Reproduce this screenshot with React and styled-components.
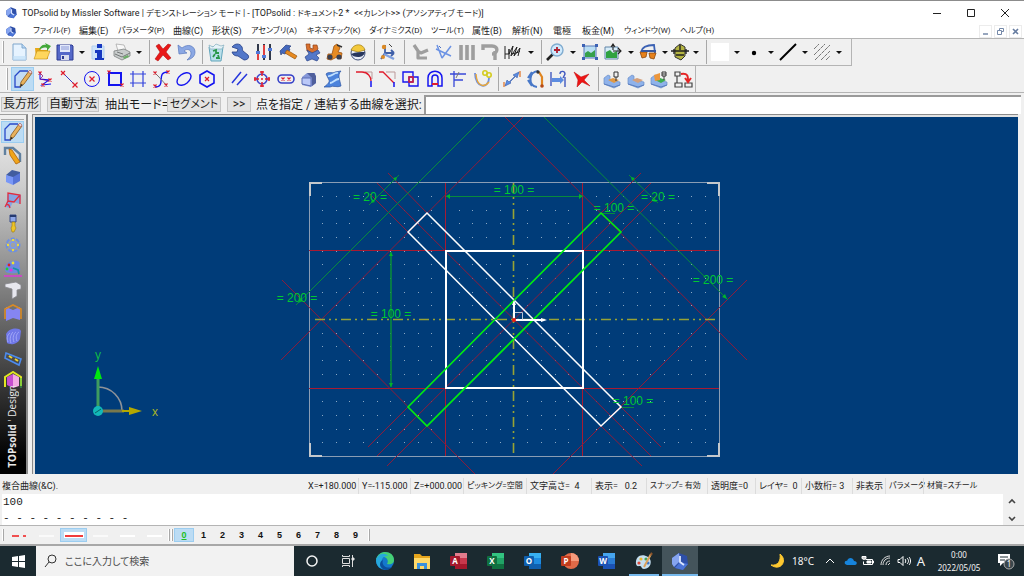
import React from 'react';
import styled, { createGlobalStyle, css } from 'styled-components';

const GlobalStyle = createGlobalStyle`
  * { box-sizing: border-box; }
  body {
    margin: 0;
    background: #f0f0f0;
    color: #1c1c1c;
    font-family: Roboto, "Noto Sans CJK JP", sans-serif;
    font-feature-settings: "palt";
    overflow: hidden;
  }
  button, input, textarea { font: inherit; color: inherit; font-feature-settings: inherit; }
  button { margin: 0; padding: 0; border: 0; background: none; }
`;

const Window = styled.div`
  display: flex;
  flex-direction: column;
  height: 100vh;
`;

const TitleBar = styled.header`
  display: flex;
  align-items: center;
  flex: 0 0 24px;
  padding: 0 2px 0 5px;
  background: #fff;
  border-top: 1px solid #8c8c8c;
`;

const Title = styled.h1`
  flex: 1;
  margin: 0 0 0 4px;
  font-size: 9px;
  font-weight: 400;
  white-space: pre;
`;

const Kana = styled.span`
  font-size: 8px;
`;

const CaptionButton = styled.button`
  display: flex;
  align-items: center;
  justify-content: center;
  width: 34px;
  height: 22px;
`;

const MenuBar = styled.nav`
  display: flex;
  align-items: center;
  flex: 0 0 14px;
  padding: 0 2px 0 5px;
  background: #fff;
`;

const MenuItems = styled.div`
  display: flex;
  flex: 1;
  margin-left: 16px;
`;

const MenuItem = styled.button`
  width: ${p => p.$w}px;
  font-size: ${p => (p.$kana ? 8 : 9)}px;
  line-height: 14px;
  text-align: left;
  white-space: nowrap;
`;

const ChildButton = styled.button`
  display: flex;
  align-items: center;
  justify-content: center;
  width: 13px;
  height: 13px;
  margin-left: 2px;
  border: 1px solid #ececec;
  background: #fff;
`;

const ToolRow = styled.div`
  display: flex;
  align-items: stretch;
  align-self: flex-start;
  flex: 0 0 ${p => p.$h}px;
  padding: 1px ${p => p.$end}px 1px 2px;
  border: solid #b4b4b4;
  border-width: ${p => (p.$first ? '0 1px 1px 0' : '0 1px 0 0')};
`;

const ToolEdge = styled.div`
  display: flex;
  flex-direction: column;
  border-top: ${p => (p.$top ? '1px solid #b4b4b4' : '0')};
  border-bottom: ${p => (p.$bottom ? '1px solid #b4b4b4' : '0')};
`;

const Grip = styled.span`
  width: 2px;
  margin: 1px ${p => p.$after}px 1px ${p => p.$before || 0}px;
  border-right: 1px solid #a8a8a8;
  border-left: 1px solid #fff;
`;

const Divider = styled.span`
  width: ${p => p.$w || 7}px;
  background: linear-gradient(#a8a8a8, #a8a8a8) 5px 0 / 1px 100% no-repeat;
`;

const selected = css`
  background: #bcdcf4;
  box-shadow: inset 0 0 0 1px #9ccdf0;
`;

const ToolButton = styled.button`
  display: flex;
  align-items: center;
  justify-content: center;
  flex: 0 0 auto;
  width: ${p => p.$w || 23}px;
  ${p => p.$active && selected}
`;

const Caret = styled.span`
  border: 3px solid transparent;
  border-top-color: #111;
  border-bottom: 0;
`;

const PromptBar = styled.form`
  display: flex;
  align-items: center;
  flex: 0 0 21px;
  padding: 2px 3px 0 1px;
  font-size: 12px;
  line-height: 16px;
  white-space: pre;
`;

const PromptButton = styled.button`
  width: ${p => p.$w}px;
  height: 15px;
  margin-right: ${p => p.$after || 6}px;
  border: 1px solid #c4c4c4;
  background: #e3e3e3;
  font-size: ${p => (p.$kana ? 11 : 12)}px;
  line-height: 13px;
`;

const PromptText = styled.label`
  width: ${p => p.$w}px;
`;

const PromptInput = styled.input`
  flex: 1;
  min-width: 0;
  height: 19px;
  padding: 0 2px;
  border: 1px solid #9a9a9a;
  border-width: 2px 0 0 2px;
  background: #fff;
  outline: 0;
`;

const Work = styled.main`
  display: flex;
  flex: 1;
  min-height: 0;
  padding-bottom: 4px;
`;

const Side = styled.aside`
  position: relative;
  width: 28px;
  padding: 3px 2px 0 1px;
  border-right: 2px solid #8a8a8a;
  border-top: 1px solid #a0a0a0;
  background: linear-gradient(#f0f0f0 0, #cdcdcd 20%, #7c7c7c 50%, #404040 72%, #000 96%);
`;

const SideGrip = styled.div`
  height: 2px;
  margin-bottom: 1px;
  border-bottom: 1px solid #a8a8a8;
`;

const SideTools = styled.div`
  display: flex;
  flex-direction: column;
  justify-content: space-between;
  height: 271px;
`;

const SideButton = styled.button`
  display: flex;
  align-items: center;
  justify-content: center;
  height: 22px;
  ${p => p.$active && selected}
`;

const Brand = styled.div`
  position: absolute;
  left: 5px;
  bottom: 6px;
  writing-mode: vertical-rl;
  transform: rotate(180deg);
  color: #e8e8e8;
  font: 10px/14px "Open Sans", sans-serif;
  white-space: nowrap;
`;

const View = styled.section`
  flex: 1;
  min-width: 0;
  margin: 0 6px 0 4px;
  border: solid #8a8a8a;
  border-width: 1px 0 0 1px;
  padding: 2px 0 0 2px;
  background: #e2e2e2;
`;

const Drawing = styled.svg`
  display: block;
  width: 100%;
  height: 100%;
  background: #003c79;
  font-family: "Liberation Sans Narrow", "Liberation Sans", sans-serif;
`;

const StatusBar = styled.div`
  display: flex;
  flex: 0 0 16px;
  font-size: 9px;
  line-height: 16px;
  white-space: pre;
`;

const StatusText = styled.div`
  flex: 1;
  padding-left: 2px;
`;

const StatusCell = styled.div`
  width: ${p => p.$w}px;
  padding-left: 3px;
  border-left: ${p => (p.$plain ? '0' : '1px solid #dcdcdc')};
  font-size: ${p => (p.$kana ? 8 : 9)}px;
`;

const Console = styled.div`
  display: flex;
  flex: 0 0 32px;
  min-height: 0;
  padding: 0 4px 0 2px;
  border-bottom: 1px solid #b4b4b4;
`;

const Log = styled.textarea`
  flex: 1;
  height: 31px;
  padding: 0 1px;
  border: 0;
  outline: 0;
  resize: none;
  overflow: hidden;
  background: #fff;
  font: 11px/16px "Liberation Mono", monospace;
`;

const Scroller = styled.div`
  display: flex;
  flex-direction: column;
  justify-content: space-between;
  width: 17px;
  padding: 2px 0;
  line-height: 10px;
`;

const BottomBar = styled.div`
  display: flex;
  flex: 0 0 20px;
  padding: 2px;
  border-bottom: 2px solid #a8a8a8;
`;

const LineButton = styled.button`
  display: flex;
  align-items: center;
  justify-content: center;
  width: 27px;
  height: 14px;
  ${p => p.$active && selected}
`;

const LayerButton = styled.button`
  width: ${p => (p.$active ? 20 : 19)}px;
  height: 14px;
  font: bold 9px/13px "Liberation Sans", sans-serif;
  color: ${p => (p.$active ? '#1fc01f' : '#111')};
  text-decoration: ${p => (p.$active ? 'underline' : 'none')};
  ${p => p.$active && selected}
`;

const TaskBar = styled.footer`
  display: flex;
  flex: 0 0 30px;
  align-items: stretch;
  background: #1b2a30;
  color: #f4f4f4;
  font-family: "Noto Sans", "Noto Sans CJK JP", sans-serif;
`;

const Start = styled.button`
  display: flex;
  align-items: center;
  justify-content: center;
  width: 36px;
`;

const Search = styled.label`
  display: flex;
  align-items: center;
  width: 258px;
  padding-left: 8px;
  background: #f2f2f2;
  color: #444;
`;

const SearchInput = styled.input`
  flex: 1;
  min-width: 0;
  margin-left: 7px;
  padding: 0;
  border: 0;
  outline: 0;
  background: none;
  font-size: 10px;
  &::placeholder { color: #4c4c4c; opacity: 1; }
`;

const TaskButton = styled.button`
  display: flex;
  align-items: center;
  justify-content: center;
  width: ${p => p.$w || 37}px;
  background: ${p => (p.$active ? '#44545b' : 'none')};
  ${p => p.$open && css`
    background-image: linear-gradient(#76b9ed, #76b9ed);
    background-repeat: no-repeat;
    background-position: center bottom;
    background-size: ${p.$active ? '100%' : '30px'} 2px;
  `}
`;

const Tray = styled.div`
  display: flex;
  align-items: center;
  margin-left: auto;
`;

const TrayButton = styled.button`
  display: flex;
  align-items: center;
  justify-content: center;
  width: ${p => p.$w || 18}px;
  font-size: ${p => p.$size || 10}px;
  line-height: 13px;
  white-space: nowrap;
`;

const Clock = styled.time`
  width: 58px;
  font-size: 8px;
  line-height: 13px;
  text-align: center;
`;

const blue = '#1414f0';
const red = '#e01c2c';

const Icon = ({ children, size = 20 }) => (
  <svg width={size} height={size} viewBox="0 0 20 20" fill="none" aria-hidden="true">{children}</svg>
);

const Cross = ({ x, y, r = 2 }) => (
  <path d={`M${x - r} ${y - r}l${2 * r} ${2 * r}m0 ${-2 * r}l${-2 * r} ${2 * r}`} stroke={red} strokeWidth="1.2" />
);

const logo = <>
  <path d="M2 7l7-5 8 3 1 8-5 6-8-2-3-4z" fill="#2e4fa8" />
  <path d="M2 7l7-5 1 8-6 6-2-3z" fill="#86a5f0" />
  <path d="M10 11l8 2-5 6-8-2z" fill="#4b74d6" />
  <path d="M10 5v6l4 3" stroke="#dbe6ff" strokeWidth="1.8" />
</>;

const sketch = <>
  <path d="M2 18V7l5-5h9l-3 12-6 4z" fill="#c3dcf5" />
  <path d="M8 18H2V7l5-5h8" stroke="#2848c8" strokeWidth="1.3" />
  <path d="M7 18l1-5 8-11 3 2-8 11z" fill="#e8b25c" stroke="#85571c" strokeWidth=".8" />
  <path d="M15 3l3 2 1-2-2-2z" fill="#f0d5d5" stroke="#a05050" strokeWidth=".6" />
  <path d="M7 18l1-3 2 1z" fill="#222" />
</>;

const box = (front, side) => <>
  <path d="M3 8l6-5 8 2v4l-7 2z" fill="#425d9f" />
  <path d="M3 8l7 2v8l-7-3z" fill={front} />
  <path d="M10 10l7-4v8l-7 4z" fill={side} />
</>;

const tray = (accent) => <>
  <path d="M2 9l4-3 2 1v4l10 2v3l-6 3-10-4z" fill="#8fb2ea" stroke="#6c8fc9" strokeWidth=".7" />
  <path d="M6 11l5-2 6 2-5 3z" fill={accent} />
  <path d="M2 15l10 3 6-2" stroke="#5b7ebf" />
</>;

const glyphs = {
  new: <><path d="M4 2h9l4 4v12H4z" fill="#e6f3ff" stroke="#7fa6cc" /><path d="M13 2v4h4" fill="#b9d8f5" stroke="#7fa6cc" /><path d="M4 14h13v4H4z" fill="#c2e0f8" opacity=".7" /></>,
  open: <><path d="M3 6h5l1 2h7v9H4z" fill="#e8a818" /><path d="M2 17l3-8h13l-3 8z" fill="#ffd65c" stroke="#c58d10" strokeWidth=".6" /><path d="M7 8c1-4 4-6 7-5l-1-2 6 3-4 5v-3c-3-1-5 0-8 2z" fill="#43a83a" /></>,
  save: <><path d="M2 3h15l1 1v14H2z" fill="#5568c8" stroke="#2c3b92" /><path d="M5 3h10v7H5z" fill="#e2e8fa" /><path d="M6 13h8v5H6z" fill="#d9dcec" /><path d="M7 14h2v3H7z" fill="#2c3b92" /><path d="M6 5h8M6 7h8" stroke="#8c9ad8" /></>,
  info: <><path d="M3 4h12v13H3z" fill="#cfe4fa" stroke="#b4d0ee" /><rect x="8" y="2" width="5" height="4" fill="#1738c0" /><path d="M6 8h7v8h2v2H6v-2h2v-5H6z" fill="#1738c0" /></>,
  print: <><path d="M4 2l8 1 2 5-8 1z" fill="#f8f8f8" stroke="#a0a0a0" strokeWidth=".7" /><path d="M2 9l10-2 6 3v4l-8 4-8-4z" fill="#c8cccc" stroke="#7c8080" strokeWidth=".8" /><path d="M3 12l7 3 8-4M5 10l6 2" stroke="#747878" /><path d="M11 15l5-2 1 2-5 2z" fill="#6cae68" /></>,
  del: <path d="M3 4l3-2 4 5 5-5 3 1-5 7 5 6-3 2-5-5-5 6-3-2 5-7z" fill="#e81818" stroke="#a80808" strokeWidth=".5" />,
  undo: <><path d="M2 3l1 9 8-1-3-2c3-3 7-1 7 2 0 3-1 4-4 7 5-1 8-4 8-8C19 4 12 1 6 6z" fill="#8ba8e4" stroke="#5777bd" strokeWidth=".7" /></>,
  recycle: <><path d="M3 5h14l-2 14H5z" fill="#b9dfea" stroke="#62a6bc" /><path d="M3 3l4 2 3-3 5 2 3-1-2 4H4z" fill="#e6f3f8" stroke="#82aebf" strokeWidth=".7" /><path d="M7 9l3-1v3h3M7 15l2-3m1 4h3l-1-3" stroke="#289848" strokeWidth="1.8" /></>,
  wrench: <path d="M2 5c3-4 8-4 10 0 1 2 0 3 1 4l5 4c2 3-1 5-4 5l-6-4c-3 0-5-1-6-4l5 0 1-3z" fill="#5277c9" stroke="#253f86" strokeWidth=".8" />,
  sliders: <><path d="M4 2v16M10 2v16M16 2v16" stroke="#30384a" strokeWidth="2" /><path d="M4 10v8M10 3v11" stroke="#e04040" strokeWidth="2" /><path d="M2 9h4v3H2zM8 13h4v3H8zM14 6h4v3h-4z" fill="#5078d8" /></>,
  hammer: <><path d="M2 9l6-6 5 1-2 2 1 2-5 4-3-1-1 2z" fill="#4468bd" stroke="#263f80" strokeWidth=".7" /><path d="M9 8l10 6-2 3L7 11z" fill="#e78a20" stroke="#99540e" strokeWidth=".7" /></>,
  fittings: <><path d="M4 2h4v4l3 1V3h4l1 4-4 4-7-2z" fill="#d9702c" stroke="#924014" strokeWidth=".7" /><path d="M5 8l5 3 6-3 2 3-4 2 3 3-2 3-5-2-5 2-2-4 4-3z" fill="#5478c8" stroke="#2b4488" strokeWidth=".7" /></>,
  caster: <><path d="M9 4l3-2 3 4-2 4 4 1-1 6-4-2-6 3-4-1 1-5 4 0z" fill="#e78b23" stroke="#9a4f10" strokeWidth=".8" /><circle cx="5" cy="15" r="2.6" fill="#3a3f50" /><circle cx="14" cy="15" r="2.6" fill="#3a3f50" /><path d="M12 3l5 2" stroke="#333" strokeWidth="1.6" /></>,
  helmet: <><circle cx="10" cy="11" r="7" fill="#e8edf8" stroke="#40507c" /><path d="M3 8c3-7 12-7 14 0l-7 2z" fill="#f3c93c" stroke="#9d7b15" strokeWidth=".7" /><path d="M3 12c5-2 9-2 14-2-1 4-4 5-7 5s-6-1-7-3z" fill="#28375e" /></>,
  axes: <><path d="M7 3v8l-4 6M7 11h9m0 0l-3-3m3 3l-3 3" stroke="#3f5fa8" strokeWidth="1.8" /><path d="M6 12l10 5" stroke="#7fa0df" strokeWidth="2.4" /><circle cx="6" cy="5" r="2.2" fill="#dc8a24" /><circle cx="5" cy="15" r="2" fill="#dc8a24" /><path d="M11 2l3 3" stroke="#444" /></>,
  grey1: <path d="M4 3l4 6 3 2 7-3M8 9v7h9" stroke="#9e9e9e" strokeWidth="3.2" strokeLinejoin="round" />,
  measure: <><path d="M3 3l5 13 9-12M2 7l15 7" stroke="#6c93e4" strokeWidth="1.5" strokeLinejoin="bevel" /><path d="M5 4l2 2" stroke="#4d6fc0" /></>,
  grey2: <path d="M4 3v15M10 3v15M16 3v15" stroke="#9e9e9e" strokeWidth="3.6" />,
  grey3: <path d="M3 8V4h9c7 0 6 8 0 8M15 9v9" stroke="#9e9e9e" strokeWidth="3.4" />,
  scribble: <path d="M2 17V4m0 8h4V7v10m0-5l4-8-2 10 6-9-3 9 6-8-2 8M9 12c3-1 6-1 8-3" stroke="#222" strokeWidth="1" strokeLinejoin="round" />,
  zoom: <><path d="M2 18l6-6" stroke="#222" strokeWidth="2.6" /><circle cx="12" cy="8" r="6" fill="#cfe9fc" stroke="#80acd0" strokeWidth="1.4" /><path d="M12 5v6M9 8h6" stroke="#b02030" strokeWidth="1.8" /></>,
  fit: <><path d="M4 4h12v12H4z" fill="#b9def4" stroke="#5878b8" /><path d="M5 15v-4l3-2 3 2 4-3v7z" fill="#36a04a" /><path d="M2 2h3v3H2zM15 2h3v3h-3zM2 15h3v3H2zM15 15h3v3h-3z" fill="#3c62b4" /></>,
  image: <><path d="M2 5h13v12H2z" fill="#d8ecf8" stroke="#6085a8" /><path d="M3 16v-6l4-2 3 3 4-2v7z" fill="#2fa240" /><path d="M10 8V3m-2 2l2-3 2 3M10 9h8m-3-3l3 3-3 3" stroke="#222" strokeWidth="1.1" /></>,
  glasses: <><path d="M3 10c1-5 5-7 13-7l1 8" stroke="#3c62b4" strokeWidth="1.8" /><path d="M2 10h7l-1 5-4 1zM11 11h7l-2 6-4-1z" fill="#e5811c" stroke="#8d480c" strokeWidth=".8" /><path d="M3 9h15" stroke="#3758a0" strokeWidth="2" /></>,
  car: <><path d="M5 6l5-4 5 3v9l-4 4-6-3z" fill="#b4b442" stroke="#333" /><path d="M1 9h18M4 7v5M16 7v5M6 13h8M10 3v5" stroke="#222" strokeWidth="1.4" /></>,
  swatch: <path d="M1 1h18v18H1z" fill="#fff" />,
  point: <circle cx="10" cy="11" r="2.2" fill="#000" />,
  stroke: <path d="M2 18L18 2" stroke="#000" strokeWidth="1.9" />,
  hatch: <path d="M2 7l5-5M2 13L13 2M3 18L18 3M9 18l9-9M14 18l4-4" stroke="#777" strokeDasharray="4 .7" />,

  sketch,
  contour: <><path d="M4 4v6l9 1-7 5 9-1" stroke={blue} strokeWidth="1.1" /><path d="M4 4l3 3-3 3 9 2" stroke="#708" strokeWidth=".7" /><Cross x={4} y={4} r={1.5} /><Cross x={14} y={11} r={1.5} /><Cross x={7} y={16} r={1.5} /></>,
  line: <><path d="M3 3l14 14" stroke="#3b3bc4" /><Cross x={4} y={4} /><Cross x={16} y={16} r={2.5} /></>,
  circle: <><circle cx="10" cy="10" r="7.5" stroke={blue} /><Cross x={10} y={10} r={2.5} /></>,
  rect: <><path d="M4 4h12v12H4z" stroke={blue} strokeWidth="2" /><Cross x={4} y={3} r={1.5} /><Cross x={17} y={16} r={1.5} /></>,
  lines4: <path d="M5 2v16M15 2v16M2 5h16M2 14h16" stroke="#3344dc" strokeWidth="1.2" />,
  spline: <><path d="M4 18c12 0 0-15 13-15" stroke={blue} strokeWidth="1.4" /><path d="M3 3l5 5 8 9" stroke="#777" /><Cross x={4} y={4} r={1.5} /><Cross x={17} y={3} r={1.5} /><Cross x={4} y={17} r={1.5} /><Cross x={15} y={16} r={1.5} /></>,
  ellipse: <ellipse cx="10" cy="10" rx="8" ry="5" stroke={blue} strokeWidth="1.4" transform="rotate(-38 10 10)" />,
  hexagon: <><path d="M10 2l7 4v8l-7 4-7-4V6z" stroke={blue} strokeWidth="1.6" /><Cross x={10} y={10} /></>,
  parallel: <path d="M3 14L12 3M8 16L18 5" stroke="#2636dc" strokeWidth="1.5" />,
  target: <><circle cx="10" cy="10" r="5" stroke="#4045cc" strokeWidth="1.6" /><path d="M10 2v5m0 6v5M2 10h5m6 0h5M9 10h2M8 3h4M8 17h4M3 8v4M17 8v4" stroke={red} strokeWidth="1.5" /></>,
  slot: <><rect x="2" y="6" width="16" height="8" rx="4" stroke="#3540c8" strokeWidth="1.6" /><Cross x={7} y={10} r={1.5} /><Cross x={13} y={10} r={1.5} /></>,
  solid: <><path d="M3 8l5-4h8l1 10-5 4-9-2z" fill="#8597d8" /><path d="M3 9h9v8l-9-2z" fill="#bac8f8" stroke="#5b6db5" /><path d="M8 4h7l2 3v7l-4 3V9z" fill="#4f5f9c" /></>,
  surface: <><path d="M3 5c3-3 7 0 9-2l6-1c-4 4-1 9 0 15-4 2-8-1-11 1l-6 0c3-2 6-5 5-7z" fill="#4c83dc" stroke="#2c55a2" strokeWidth=".7" /><path d="M5 7c4 1 6-4 10-3M7 14c3 0 5-4 9-4" stroke="#c0e0ff" strokeWidth="1.8" /></>,
  fillet: <><path d="M10 3h7v7" stroke="#b99" /><path d="M1 3h6c6 0 9 5 9 9" stroke={red} strokeWidth="1.3" /><path d="M16 12v6" stroke={blue} strokeWidth="1.5" /></>,
  chamfer: <><path d="M8 3h9v7" stroke="#b99" /><path d="M1 3h4l11 11" stroke={red} strokeWidth="1.3" /><path d="M16 13v5" stroke={blue} strokeWidth="1.5" /></>,
  union: <><path d="M2 3h10v10H2zM8 8h9v9H8z" stroke={blue} strokeWidth="1.4" /><path d="M8 8h4v5H8z" stroke={red} strokeWidth="1.4" /></>,
  arch: <><path d="M3 17V9c0-9 14-9 14 0v8h-4V9c0-4-6-4-6 0v8z" stroke={blue} strokeWidth="1.5" /><path d="M7 15h6" stroke={red} strokeWidth="2" /></>,
  trim: <><path d="M6 2v16M2 5h16M6 11h9" stroke="#3848d8" strokeWidth="1.3" /><path d="M11 3l-3 6" stroke="#777" /></>,
  hook: <><path d="M3 4c0 16 14 16 14 5" stroke="#6c8de0" strokeWidth="1.8" /><path d="M4 5c1 14 9 13 13 8" stroke="#e9a838" strokeWidth="1.4" /><circle cx="13" cy="4" r="2.2" stroke="#d4cc20" strokeWidth="1.6" /><circle cx="17" cy="6" r="2.2" stroke="#d4cc20" strokeWidth="1.6" /></>,
  dim: <><path d="M2 13v5M18 2v6" stroke="#e27020" strokeWidth="1.2" /><path d="M3 17l2-6 2 2 6-6-2-1 6-3-2 6-1-2-6 6 1 1z" fill="#5b8ee4" stroke="#385aa8" strokeWidth=".6" /></>,
  angle: <><path d="M13 2C3 3 3 17 12 18M3 9l4-6M3 11l4 6" stroke="#4878c8" strokeWidth="2.2" /><path d="M14 3l3 5v9" stroke="#e08520" strokeWidth="2.2" /><circle cx="13" cy="3" r="1.7" fill="#333" /><circle cx="17" cy="17" r="1.8" fill="#b54b18" /></>,
  align: <><path d="M3 3v14M17 8v10M12 5c0-4 5-3 5 0l-2 4" stroke="#4059c0" strokeWidth="1.4" /><path d="M4 9h8V7l4 4-4 4v-2H4z" fill="#5c8ce0" /></>,
  remove: <path d="M2 3l7 5 8-3-5 6 6 6-8-4-5 5 1-7z" fill="#ee1515" stroke="#bd0808" strokeWidth=".5" />,
  part1: <>{tray('#e29944')}<path d="M12 3h4v5h-4zM14 8v4" stroke="#333" /></>,
  part2: tray('#d4a07c'),
  part3: <>{tray('#3dae52')}<path d="M5 6l6-2v7l-5 1z" fill="#ec963c" /><path d="M13 3h4v4h-4zM15 7v4M13 5h4" stroke="#333" /></>,
  replace: <><path d="M2 3h5v4H2zM12 14h7v4h-7zM2 14h7v4H2zM4 7v7" stroke="#444" strokeWidth="1.2" /><path d="M8 5c7-1 7 2 7 7m-3-3l3 4 3-4" stroke="#e52424" strokeWidth="2" /></>,

  pencil: <><path d="M2 10V3h8l7 6v8" stroke="#60809f" strokeWidth="2.4" /><path d="M6 4l3 1 8 12-4 2-6-9z" fill="#f0a51b" stroke="#ad6207" strokeWidth=".8" /></>,
  cube: box('#7997f7', '#5674d8'),
  sweep: <><path d="M5 3l13 2-1 9-7-2-3 6-4-1z" fill="#86a4e2" /><path d="M17 14V5L5 3v8l-3 6M5 11l6 1 6-7M3 15c3-1 3 0 4 3" stroke="#e22c3e" strokeWidth="1.3" /></>,
  bolt: <><path d="M7 2h6v7H7z" fill="#8da6e8" stroke="#394c89" /><path d="M7 2h6v2H7z" fill="#263a70" /><path d="M9 9h3v4l1 2-2 4H9l-1-4 1-2z" fill="#eec528" stroke="#98780f" strokeWidth=".6" /></>,
  flange: <><circle cx="10" cy="10" r="6.5" stroke="#6e90e0" strokeWidth="2" strokeDasharray="4 1.500" /><circle cx="10" cy="10" r="3" stroke="#7a9bec" strokeWidth="1.4" /><path d="M10 4v2m0 8v2M4 10h2m8 0h2" stroke="#ecdc36" strokeWidth="2" /></>,
  palette: <><path d="M2 11c0-7 8-9 12-8 5 1 1 5 3 7 2 4-5 6-10 5-3 0-5-1-5-4z" fill="#6c87e0" /><circle cx="6" cy="7" r="1.4" fill="#e02020" /><circle cx="10" cy="5" r="1.4" fill="#f2e32a" /><circle cx="4" cy="11" r="1.4" fill="#22d032" /><circle cx="8" cy="12" r="1.6" fill="#e134da" /><path d="M10 10l5 2 1 4" stroke="#1792aa" strokeWidth="1.7" /><path d="M1 18h18" stroke="#e134da" strokeWidth="1.4" /></>,
  profile: <path d="M2 4l11-2 5 3v4l-4 1v6l-5 3V9L2 7z" fill="#e7e7ee" stroke="#86868c" strokeWidth=".8" />,
  sheet: <><path d="M3 4l7 3v8l-7 3zM10 7l7-3v13l-7-2z" fill="#8585f2" /><path d="M2 16V6l8-4 8 4v10" stroke="#da8b25" strokeWidth="1.6" /></>,
  spring: <><path d="M3 8c3-6 13-7 15-3l-1 8c-3 6-10 6-13 4z" fill="#7078e8" /><path d="M5 16c-2-4 0-8 2-9m1 10c-2-4 0-9 2-11m1 10c-2-4 0-9 2-10m1 9c-2-4 0-8 2-9" stroke="#a2a8f8" /></>,
  plate: <><path d="M3 5l15 6-2 6L2 10z" stroke="#4c8bed" strokeWidth="1.6" /><path d="M6 8l3 2m3 1l3 2" stroke="#f0d52e" strokeWidth="2" /></>,
  corner: <><path d="M4 6l6-3v14l-6-3z" fill="#c84ed0" /><path d="M10 3l6 3v9l-6 2z" fill="#f4a9e4" /><path d="M2 16V6l8-5 8 5v9" stroke="#e2e522" strokeWidth="2" /><path d="M18 7v10" stroke="#30b550" /></>,
};

const menus = [
  ['ファイル(F)', 46, 1], ['編集(E)', 39], ['パラメータ(P)', 55, 1], ['曲線(C)', 39], ['形状(S)', 39],
  ['アセンブリ(A)', 56, 1], ['キネマチック(K)', 62, 1], ['ダイナミクス(D)', 62, 1], ['ツール(T)', 41, 1],
  ['属性(B)', 40], ['解析(N)', 41], ['電極', 29], ['板金(M)', 42], ['ウィンドウ(W)', 56, 1], ['ヘルプ(H)', 44, 1],
];

// '|' is a divider, 'v' the drop-down arrow of the button before it
const mainTools = [
  'new', 'open', 'save', 'v', 'info', 'print', 'v', '|', 'del', 'undo', '|',
  ['recycle', 24], ['wrench', 24], ['sliders', 24], ['hammer', 24], 'fittings', 'caster', 'helmet', '|',
  'axes', ['|', 9], ['grey1', 24], 'measure', 'grey2', 'grey3', ['scribble', 24], 'v', '|',
  ['zoom', 24], 'v', 'fit', ['image', 24], 'v', 'glasses', 'v', ['car', 20], 'v', '|',
  'swatch', 'v', 'point', 'v', 'stroke', 'v', 'hatch', 'v',
];

const curveTools = [
  'sketch', 'contour', 'line', 'circle', 'rect', 'lines4', 'spline', 'ellipse', 'hexagon', ['|', 9],
  'parallel', ['target', 24], 'slot', ['solid', 24], 'surface', ['|', 9],
  'fillet', 'chamfer', ['union', 24], 'arch', ['trim', 24], 'hook', '|',
  'dim', 'angle', ['align', 24], 'remove', '|', ['part1', 24], 'part2', ['part3', 24], 'replace',
];

const sideTools = ['sketch', 'pencil', 'cube', 'sweep', 'bolt', 'flange', 'palette', 'profile', 'sheet', 'spring', 'plate', 'corner'];

const Tools = ({ items, active }) => items.map((item, i) => {
  const [name, w] = Array.isArray(item) ? item : [item];
  if (name === '|') return <Divider key={i} $w={w} />;
  if (name === 'v') return <ToolButton key={i} type="button" $w={11} aria-label="options"><Caret /></ToolButton>;
  return (
    <ToolButton key={i} type="button" $w={w} $active={name === active} aria-label={name}>
      <Icon>{glyphs[name]}</Icon>
    </ToolButton>
  );
});

const gridDots = [];
for (let row = 0; row < 19; row++) {
  for (let col = 0; col < 29; col++) {
    if (col !== 14 && row !== 9) gridDots.push([Math.round(322 + col * 13.68), Math.round(196 + row * 13.68)]);
  }
}

const dimensions = [
  [514, 194, '= 100 ='], [391, 318, '= 100 ='], [297, 302, '= 200 ='], [370, 201, '= 20 ='],
  [658, 201, '= 20 ='], [713, 284, '= 200 ='], [614, 212, '= 100 ='], [633, 405, '= 100 ='],
];

const Model = () => (
  <Drawing viewBox="35 117 983 357" preserveAspectRatio="xMidYMid slice" fill="none" role="img" aria-label="model view">
    <g fill="#8aa8c4">
      {gridDots.map(([x, y]) => <rect key={`${x}-${y}`} x={x} y={y} width="1" height="1" />)}
    </g>
    <path d="M309.5 182.5h410v274h-410z" stroke="#8a9db4" />
    <path d="M322 183h-12v13M707 183h12v13M322 456h-12v-13M707 456h12v-13" stroke="#c4c8cc" strokeWidth="2" />
    <path d="M309 250.5h410M309 388.5h410M445.5 183v273M582.5 183v273" stroke="#a81a32" />
    <g stroke="#8c1c3c" strokeWidth="1">
      <path d="M377 183l274 273M651 183L377 456" />
      <path d="M388 173l39 40M370 194l38 38M621 407l40 40M601 426l41 40" />
      <path d="M641 173l-40 40M657 196l-36 36M408 407l-40 40M427 426l-40 40" />
      <path d="M523 117L281 360M505 117l242 243M282 280l193 194M747 280L553 474" />
    </g>
    <path d="M315 319.5h404" stroke="#98a334" strokeWidth="1.4" strokeDasharray="10 4 2 4 2 4" />
    <path d="M513.5 183v270" stroke="#98a334" strokeWidth="1.6" strokeDasharray="10 4 2 4 2 4" />
    <g stroke="#088a3c">
      <path d="M484 117L296 305M544 117l184 183M369 205l30-30M629 175l29 28M446 196.5h137M602 213.5h13M622 407.5h12" />
      <path d="M391 252v135" strokeWidth="1.6" />
    </g>
    <path
      d="M446 196l4-2v5zM583 196l-4-2v5zM391 252l-2 4h4zM391 387l-2-4h4zM397 177l-4 1 3 3zM371 203l1-4 3 3zM631 177l4 1-3 3zM656 202l-1-4-3 3zM727 299l-2-5-3 3zM298 303l2-5 3 3z"
      fill="#00b42c"
    />
    <path d="M446 251h137v137H446z" stroke="#fff" strokeWidth="2" />
    <path d="M427 213l194 194-20 19-193-194z" stroke="#fff" strokeWidth="1.5" />
    <path d="M601 213l20 19-194 194-19-19z" stroke="#00ee10" strokeWidth="1.6" />
    <path d="M514 303v17h30" stroke="#fff" strokeWidth="2" />
    <path d="M515 312.5h7.5v7" stroke="#b8c4d4" />
    <path d="M514 300l-2 5h4zM547 320l-6-2v4z" fill="#fff" />
    <circle cx="514" cy="320" r="2" fill="#f01c10" />
    <g fill="#00c832" fontSize="12" textAnchor="middle">
      {dimensions.map(([x, y, label]) => <text key={`${x}-${y}`} x={x} y={y}>{label}</text>)}
    </g>
    <path d="M98 387a24 24 0 0 1 24 24" stroke="#8f9399" strokeWidth="1.6" />
    <path d="M98 409v-31" stroke="#3f9c60" strokeWidth="3" />
    <path d="M100 411h24" stroke="#78784c" strokeWidth="3" />
    <path d="M122 411h10" stroke="#b4a800" strokeWidth="2" />
    <path d="M98 366l-4 13h8z" fill="#00e810" />
    <path d="M142 411l-13-4v8z" fill="#b4a800" />
    <circle cx="98" cy="411" r="5" fill="#12b8b8" />
    <path d="M95 413l6-4" stroke="#0a6068" />
    <g fontSize="12" textAnchor="middle" fontFamily="Liberation Sans, sans-serif">
      <text x="98" y="359" fill="#10b848">y</text>
      <text x="155" y="416" fill="#a8b428">x</text>
    </g>
  </Drawing>
);

const statusCells = [
  ['X=+180.000', 53], ['Y=-115.000', 52], ['Z=+000.000', 53], ['ピッキング=空間', 63, 1], ['文字高さ=  4', 65],
  ['表示=   0.2', 55], ['スナップ= 有効', 61, 1], ['透明度=0', 48], ['レイヤ=  0', 46], ['小数桁= 3', 51],
  ['非表示', 33], ['パラメータ', 38, 1], ['材質=スチール', 101, 1],
];

const lineTypes = [
  ['#f05050', '7 4 3 4'], ['#fafafa'], ['#f03c3c'], ['#fafafa'], ['#fff'], ['#fff'],
];

const Office = ({ letter, dark, main, light }) => (
  <Icon>
    <path d="M6 2h12v5H6z" fill={light} />
    <path d="M6 7h12v6H6z" fill={main} />
    <path d="M6 13h12v5H6z" fill={dark} />
    <rect x="1" y="5" width="10" height="10" rx="1" fill={dark} />
    <text x="6" y="13" fill="#fff" fontSize="8" fontWeight="700" textAnchor="middle" fontFamily="Open Sans">{letter}</text>
  </Icon>
);

const apps = [
  ['Edge', <Icon>
    <circle cx="10" cy="10" r="9" fill="#1478cc" />
    <path d="M1 9C3-2 19-1 19 9c0 4-4 5-7 4 2-3 0-7-4-7-4 0-6 2-7 3z" fill="#45cf76" />
    <path d="M1 9c2-7 9-8 12-4-8-1-8 9-3 13-6 0-9-4-9-9z" fill="#27a8dc" />
    <path d="M8 9c-2 5 3 9 9 7-4 5-11 3-12-2 0-3 1-4 3-5z" fill="#0b4f9c" />
  </Icon>],
  ['Explorer', <Icon>
    <path d="M2 3h6l2 2h8v13H2z" fill="#e6a51c" />
    <path d="M2 7h16v11H2z" fill="#ffd968" />
    <path d="M5 18v-6h10v6h-3v-3H8v3z" fill="#3b91dc" />
  </Icon>],
  ['Access', <Office letter="A" dark="#a4182c" main="#c8384c" light="#e27c8c" />],
  ['Excel', <Office letter="X" dark="#107040" main="#21a366" light="#33c481" />],
  ['Outlook', <Office letter="O" dark="#0f5fae" main="#1e8ce0" light="#38b0f0" />],
  ['PowerPoint', <Icon>
    <circle cx="11" cy="10" r="8" fill="#e06a48" />
    <path d="M11 2a8 8 0 0 1 8 8h-8z" fill="#f59a7c" />
    <rect x="1" y="5" width="10" height="10" rx="1" fill="#c23c1e" />
    <text x="6" y="13" fill="#fff" fontSize="8" fontWeight="700" textAnchor="middle" fontFamily="Open Sans">P</text>
  </Icon>],
  ['Word', <Office letter="W" dark="#1b52b4" main="#2b7cd3" light="#46a5ee" />],
  ['Paint', <Icon>
    <path d="M2 13C1 5 8 2 14 6c5 3 3 12-4 12-3 0-2-3-4-3s-3 1-4-2z" fill="#c5dff0" />
    <circle cx="5" cy="12" r="1.6" fill="#da4a3c" /><circle cx="7" cy="8" r="1.6" fill="#e9b530" />
    <circle cx="12" cy="8" r="1.6" fill="#45a25a" /><circle cx="14" cy="12" r="1.6" fill="#3b75cc" />
    <path d="M10 16l7-13" stroke="#dca15c" strokeWidth="2" /><path d="M16 5l1-4 2 2z" fill="#8c542a" />
  </Icon>],
];

export default function App() {
  return (
    <Window>
      <GlobalStyle />
      <TitleBar>
        <Icon size={13}>{logo}</Icon>
        <Title>
          {'TOPsolid by Missler Software | '}<Kana>デモンストレーション モード</Kana>
          {' | - [TOPsolid : '}<Kana>ドキュメント</Kana>{'2 *  <<'}<Kana>カレント</Kana>
          {'>> ('}<Kana>アソシアティブ モード</Kana>)]
        </Title>
        <CaptionButton aria-label="minimize"><svg width="10" height="10"><path d="M1 5.5h8" stroke="#222" /></svg></CaptionButton>
        <CaptionButton aria-label="maximize"><svg width="10" height="10"><path d="M1.5 1.5h7v7h-7z" fill="none" stroke="#222" /></svg></CaptionButton>
        <CaptionButton aria-label="close"><svg width="10" height="10"><path d="M1 1l8 8M9 1L1 9" stroke="#222" /></svg></CaptionButton>
      </TitleBar>

      <MenuBar>
        <Icon size={12}>{logo}</Icon>
        <MenuItems>
          {menus.map(([label, w, kana]) => <MenuItem key={label} $w={w} $kana={kana}>{label}</MenuItem>)}
        </MenuItems>
        <ChildButton aria-label="minimize document"><svg width="9" height="9"><path d="M2 7h5" stroke="#7488a8" strokeWidth="1.5" /></svg></ChildButton>
        <ChildButton aria-label="restore document"><svg width="9" height="9"><path d="M3.5 3V1.5h4v3H6M1.5 3.5h4v4h-4z" fill="none" stroke="#7488a8" /></svg></ChildButton>
        <ChildButton aria-label="close document"><svg width="9" height="9"><path d="M2 2l5 5M7 2L2 7" stroke="#667ca0" strokeWidth="1.6" /></svg></ChildButton>
      </MenuBar>

      <ToolEdge $top>
        <ToolRow $first $h={27} $end={7}>
          <Grip $after={3} />
          <Tools items={mainTools} />
        </ToolRow>
      </ToolEdge>
      <ToolEdge $bottom>
        <ToolRow $h={26} $end={1}>
          <Grip $before={4} $after={3} />
          <Tools items={curveTools} active="sketch" />
        </ToolRow>
      </ToolEdge>

      <PromptBar onSubmit={e => e.preventDefault()}>
        <PromptButton type="button" $w={40}>長方形</PromptButton>
        <PromptButton type="button" $w={52}>自動寸法</PromptButton>
        <PromptText as="span" $w={62}>抽出モード=</PromptText>
        <PromptButton type="button" $w={54} $kana>セグメント</PromptButton>
        <PromptButton type="button" $w={24} $after={5}>&gt;&gt;</PromptButton>
        <PromptText htmlFor="command" $w={168}>点を指定 / 連結する曲線を選択:</PromptText>
        <PromptInput id="command" autoFocus />
      </PromptBar>

      <Work>
        <Side>
          <SideGrip />
          <SideTools>
            {sideTools.map((name, i) => (
              <SideButton key={name} $active={i === 0} aria-label={`${name} tools`}><Icon>{glyphs[name]}</Icon></SideButton>
            ))}
          </SideTools>
          <Brand><b>TOPsolid</b> ' Design</Brand>
        </Side>
        <View><Model /></View>
      </Work>

      <StatusBar>
        <StatusText>複合曲線(&amp;C).</StatusText>
        {statusCells.map(([label, w, kana], i) => (
          <StatusCell key={label} $w={w} $kana={kana} $plain={i === 0}>{label}</StatusCell>
        ))}
      </StatusBar>

      <Console>
        <Log readOnly rows={2} aria-label="command log" value={'100\n- - - - - - - - - -'} />
        <Scroller>
          <button aria-label="scroll up"><svg width="8" height="8"><path d="M1 5l3-3 3 3" fill="none" stroke="#444" strokeWidth="1.6" /></svg></button>
          <button aria-label="scroll down"><svg width="8" height="8"><path d="M1 2l3 3 3-3" fill="none" stroke="#444" strokeWidth="1.6" /></svg></button>
        </Scroller>
      </Console>

      <BottomBar>
        <Grip $after={2} />
        {lineTypes.map(([color, dash], i) => (
          <LineButton key={i} $active={i === 2} aria-label={`line type ${i + 1}`}>
            <svg width={i === 2 ? 20 : 15} height="6">
              {i === 2 && <path d="M0 0h20v6H0z" fill="#fff" />}
              <path d={i === 2 ? 'M1 4h18' : 'M0 4h15'} stroke={color} strokeWidth="2" strokeDasharray={dash} />
            </svg>
          </LineButton>
        ))}
        <Grip $after={1} />
        <Grip $after={1} />
        {Array.from('0123456789', d => <LayerButton key={d} $active={d === '0'}>{d}</LayerButton>)}
        <Grip $before={3} $after={0} />
      </BottomBar>

      <TaskBar>
        <Start aria-label="start">
          <svg width="13" height="13"><path d="M0 2l6-1v5H0zM7 1l6-1v6H7zM0 7h6v5l-6-1zM7 7h6v6l-6-1z" fill="#fff" /></svg>
        </Start>
        <Search>
          <svg width="14" height="14" fill="none" stroke="#333"><circle cx="8" cy="5" r="4" /><path d="M5 8l-4 5" /></svg>
          <SearchInput placeholder="ここに入力して検索" aria-label="検索" />
        </Search>
        <TaskButton $w={36} aria-label="Cortana">
          <svg width="14" height="14"><circle cx="7" cy="7" r="5" fill="none" stroke="#f4f4f4" strokeWidth="1.5" /></svg>
        </TaskButton>
        <TaskButton $w={36} aria-label="task view">
          <svg width="14" height="14" fill="none" stroke="#ddd"><path d="M1.5 4.5h7v5h-7zM1.5 1v1.5h7V1M1.5 13v-1.5h7V13M11.5 1v12" /><path d="M11 4h2v2h-2z" fill="#fff" /></svg>
        </TaskButton>
        {apps.map(([name, icon]) => <TaskButton key={name} $open={name === 'Paint'} aria-label={name}>{icon}</TaskButton>)}
        <TaskButton $w={36} $open $active aria-label="TOPsolid"><Icon>{logo}</Icon></TaskButton>
        <Tray>
          <TrayButton $w={20} aria-label="weather">
            <svg width="15" height="15"><path d="M10 0c8 6 1 18-9 11 7 1 10-4 9-11z" fill="#fdc830" stroke="#fdc830" /></svg>
          </TrayButton>
          <TrayButton $w={32}>18°C</TrayButton>
          <TrayButton $w={22} aria-label="hidden icons"><svg width="10" height="8"><path d="M1 6l4-4 4 4" fill="none" stroke="#fff" /></svg></TrayButton>
          <TrayButton aria-label="OneDrive"><svg width="13" height="10"><path d="M3 9C-1 8 1 4 3 5c1-4 6-4 7 0 4 0 3 4 1 4z" fill="#1684dc" /></svg></TrayButton>
          <TrayButton aria-label="battery">
            <svg width="14" height="12" fill="none" stroke="#fff"><path d="M4.5 4.5h7v5h-9v-3M11.5 6h1v2h-1" /><path d="M6 6h4v2H6z" fill="#fff" /><path d="M1 1.5h4v2l-2 1-2-1z" fill="#ccc" /></svg>
          </TrayButton>
          <TrayButton aria-label="network">
            <svg width="12" height="12" fill="none" stroke="#ddd"><path d="M1 10C1 5 5 1 10 1M3 10c0-4 3-7 7-7M6 10c0-3 2-4 4-4M8 10l2-2" /></svg>
          </TrayButton>
          <TrayButton $w={17} aria-label="volume">
            <svg width="14" height="12" fill="none" stroke="#fff"><path d="M1 4.5h2l3-3v9l-3-3H1zM8 4c1 1 1 3 0 4M10 3c2 2 2 4 0 6M12 2c2 2 2 6 0 8" /></svg>
          </TrayButton>
          <TrayButton $w={18} $size={13}>A</TrayButton>
          <Clock dateTime="2022-05-05T00:00">0:00<br />2022/05/05</Clock>
          <TrayButton $w={36} aria-label="notifications">
            <svg width="20" height="20">
              <path d="M2 3h12v9H7l-3 3v-3H2z" fill="#fff" /><path d="M4 6h8M4 9h5" stroke="#1b2a30" />
              <circle cx="13" cy="13" r="5" fill="#3b474c" stroke="#aaa" />
              <text x="13" y="16" fill="#fff" fontSize="8" textAnchor="middle">1</text>
            </svg>
          </TrayButton>
        </Tray>
      </TaskBar>
    </Window>
  );
}
